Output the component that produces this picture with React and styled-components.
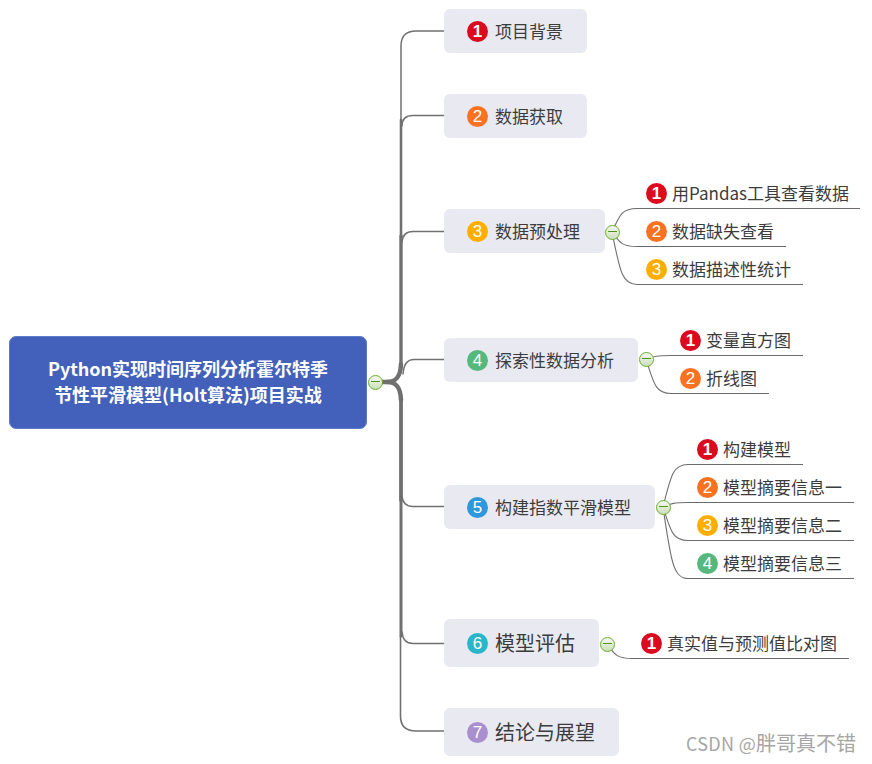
import React from "react";
import styled, { createGlobalStyle } from "styled-components";

const GlobalStyle = createGlobalStyle`
  html, body {
    margin: 0;
    padding: 0;
    background: #fff;
  }
`;

const FONT = `"Noto Sans CJK SC", "Liberation Sans", sans-serif`;
const COLORS = ["#dc0a1e", "#f97222", "#ffae00", "#55b97e", "#2e98dd", "#2ab6ca", "#a98fcf"];

const Canvas = styled.div`
  position: relative;
  width: 872px;
  height: 764px;
  overflow: hidden;
  font-family: ${FONT};
  color: #3c3c3c;
`;
const Lines = styled.svg`
  position: absolute;
  inset: 0;
  fill: none;
  stroke: #707070;
  stroke-linecap: round;
`;
const Root = styled.div`
  position: absolute;
  left: 9px;
  top: 336px;
  width: 358px;
  height: 93px;
  box-sizing: border-box;
  padding-bottom: 3px;
  display: flex;
  align-items: center;
  justify-content: center;
  text-align: center;
  border-radius: 7px;
  border: 1px solid #5f79c9;
  background: #4361bb;
  color: #fff;
  font-size: 18px;
  font-weight: 700;
  line-height: 26px;
`;
const Topic = styled.div`
  position: absolute;
  left: 444px;
  top: ${(p) => p.$y}px;
  width: ${(p) => p.$w}px;
  height: ${(p) => p.$h}px;
  box-sizing: border-box;
  padding-left: 23px;
  display: flex;
  align-items: center;
  gap: 7px;
  border-radius: 6px;
  background: #e9e9f2;
  font-size: ${(p) => (p.$big ? 20 : 17)}px;
  white-space: nowrap;
`;
const Sub = styled.div`
  position: absolute;
  left: ${(p) => p.$x}px;
  top: ${(p) => p.$y - 29}px;
  width: ${(p) => p.$w}px;
  height: 30px;
  box-sizing: border-box;
  padding-left: 10px;
  display: flex;
  align-items: center;
  gap: 5px;
  border-bottom: 1px solid #6a6a6a;
  font-size: 17px;
  white-space: nowrap;
`;
const Label = styled.span`
  padding-bottom: 2px;
`;
const Marker = styled.span`
  flex: none;
  width: 21px;
  height: 21px;
  border-radius: 50%;
  display: flex;
  align-items: center;
  justify-content: center;
  background: ${(p) => COLORS[p.$n - 1]};
  color: #fff;
  font-family: "Liberation Sans", sans-serif;
  font-size: 17px;
  font-weight: ${(p) => (p.$n === 1 ? 700 : 400)};
  line-height: 1;
`;
const Toggle = styled.span`
  position: absolute;
  left: ${(p) => p.$x - 7.5}px;
  top: ${(p) => p.$y - 7.5}px;
  width: 15px;
  height: 15px;
  box-sizing: border-box;
  border-radius: 50%;
  border: 1px solid #68ad2a;
  background: linear-gradient(#f6f8f3, #cbdfba);
  &::after {
    content: "";
    position: absolute;
    left: 2px;
    right: 2px;
    top: 5.5px;
    height: 1px;
    background: #4f9420;
  }
`;
const Watermark = styled.div`
  position: absolute;
  left: 686px;
  top: 730px;
  font-size: 18px;
  line-height: 26px;
  letter-spacing: 0.3px;
  color: #a6a6a6;
  white-space: nowrap;
`;
const WatermarkName = styled.span`
  font-size: 20px;
  letter-spacing: 0;
`;

const topics = [
  { label: "项目背景", y: 9, w: 143, h: 44 },
  { label: "数据获取", y: 94, w: 143, h: 44 },
  { label: "数据预处理", y: 209, w: 161, h: 44 },
  { label: "探索性数据分析", y: 338, w: 194, h: 44 },
  { label: "构建指数平滑模型", y: 485, w: 211, h: 44 },
  { label: "模型评估", y: 619, w: 155, h: 48, big: true },
  { label: "结论与展望", y: 708, w: 175, h: 48, big: true },
];

const groups = [
  {
    x: 612,
    y: 232,
    items: [
      { label: "用Pandas工具查看数据", y: 208, end: 860 },
      { label: "数据缺失查看", y: 246, end: 786 },
      { label: "数据描述性统计", y: 284, end: 803 },
    ],
  },
  {
    x: 646,
    y: 359,
    items: [
      { label: "变量直方图", y: 355, end: 803 },
      { label: "折线图", y: 393, end: 769 },
    ],
  },
  {
    x: 663,
    y: 507,
    items: [
      { label: "构建模型", y: 464, end: 803 },
      { label: "模型摘要信息一", y: 502, end: 854 },
      { label: "模型摘要信息二", y: 540, end: 854 },
      { label: "模型摘要信息三", y: 578, end: 854 },
    ],
  },
  {
    x: 607,
    y: 644,
    items: [{ label: "真实值与预测值比对图", y: 658, end: 849 }],
  },
];

const Connectors = () => (
  <Lines width="872" height="764" viewBox="0 0 872 764">
    {/* trunk, thick near the root and thinner toward the ends */}
    <path d="M380 382H387C396 382 400.500 377 401 364" strokeWidth="4.5" />
    <path d="M387 382C396 382 400.500 387 401 400" strokeWidth="4.5" />
    <path d="M401 364V236" strokeWidth="3.4" />
    <path d="M401 236V120" strokeWidth="2.6" />
    <path d="M401 120V46Q401 31 416 31H444" strokeWidth="1.5" />
    <path d="M401 400V500" strokeWidth="3.8" />
    <path d="M401 500V636" strokeWidth="3" />
    <path d="M400.500 636V716Q400.500 731 416 731H444" strokeWidth="1.6" />
    {/* topic branches */}
    <path d="M402 126Q402 115.500 413 115.500H444" strokeWidth="1.5" />
    <path d="M402 242Q403 231.500 413 231.500H444" strokeWidth="1.5" />
    <path d="M403 374Q404 359.500 414 359.500H444" strokeWidth="1.5" />
    <path d="M402 496Q403 506.500 413 506.500H444" strokeWidth="1.5" />
    <path d="M402 632Q403 643.500 413 643.500H444" strokeWidth="1.5" />
    {/* sub-branches */}
    {groups.map((g) =>
      g.items.map((it) => {
        const dy = it.y + 0.5 - g.y;
        return (
          <path
            key={it.label}
            strokeWidth="1.1"
            d={`M${g.x} ${g.y}C${g.x + 8} ${g.y + dy * 0.75} ${g.x + 10} ${it.y + 0.5} ${g.x + 25} ${it.y + 0.5}`}
          />
        );
      })
    )}
  </Lines>
);

export default function App() {
  return (
    <Canvas>
      <GlobalStyle />
      <Connectors />
      <Root>
        <div>
          Python实现时间序列分析霍尔特季
          <br />
          节性平滑模型(Holt算法)项目实战
        </div>
      </Root>
      <Toggle $x={375} $y={382} />
      {topics.map((t, i) => (
        <Topic key={t.label} $y={t.y} $w={t.w} $h={t.h} $big={t.big}>
          <Marker $n={i + 1}>{i + 1}</Marker>
          <Label>{t.label}</Label>
        </Topic>
      ))}
      {groups.map((g) => (
        <React.Fragment key={g.x}>
          <Toggle $x={g.x} $y={g.y} />
          {g.items.map((it, i) => (
            <Sub key={it.label} $x={g.x + 24} $y={it.y} $w={it.end - g.x - 24}>
              <Marker $n={i + 1}>{i + 1}</Marker>
              <Label>{it.label}</Label>
            </Sub>
          ))}
        </React.Fragment>
      ))}
      <Watermark>
        CSDN @<WatermarkName>胖哥真不错</WatermarkName>
      </Watermark>
    </Canvas>
  );
}
